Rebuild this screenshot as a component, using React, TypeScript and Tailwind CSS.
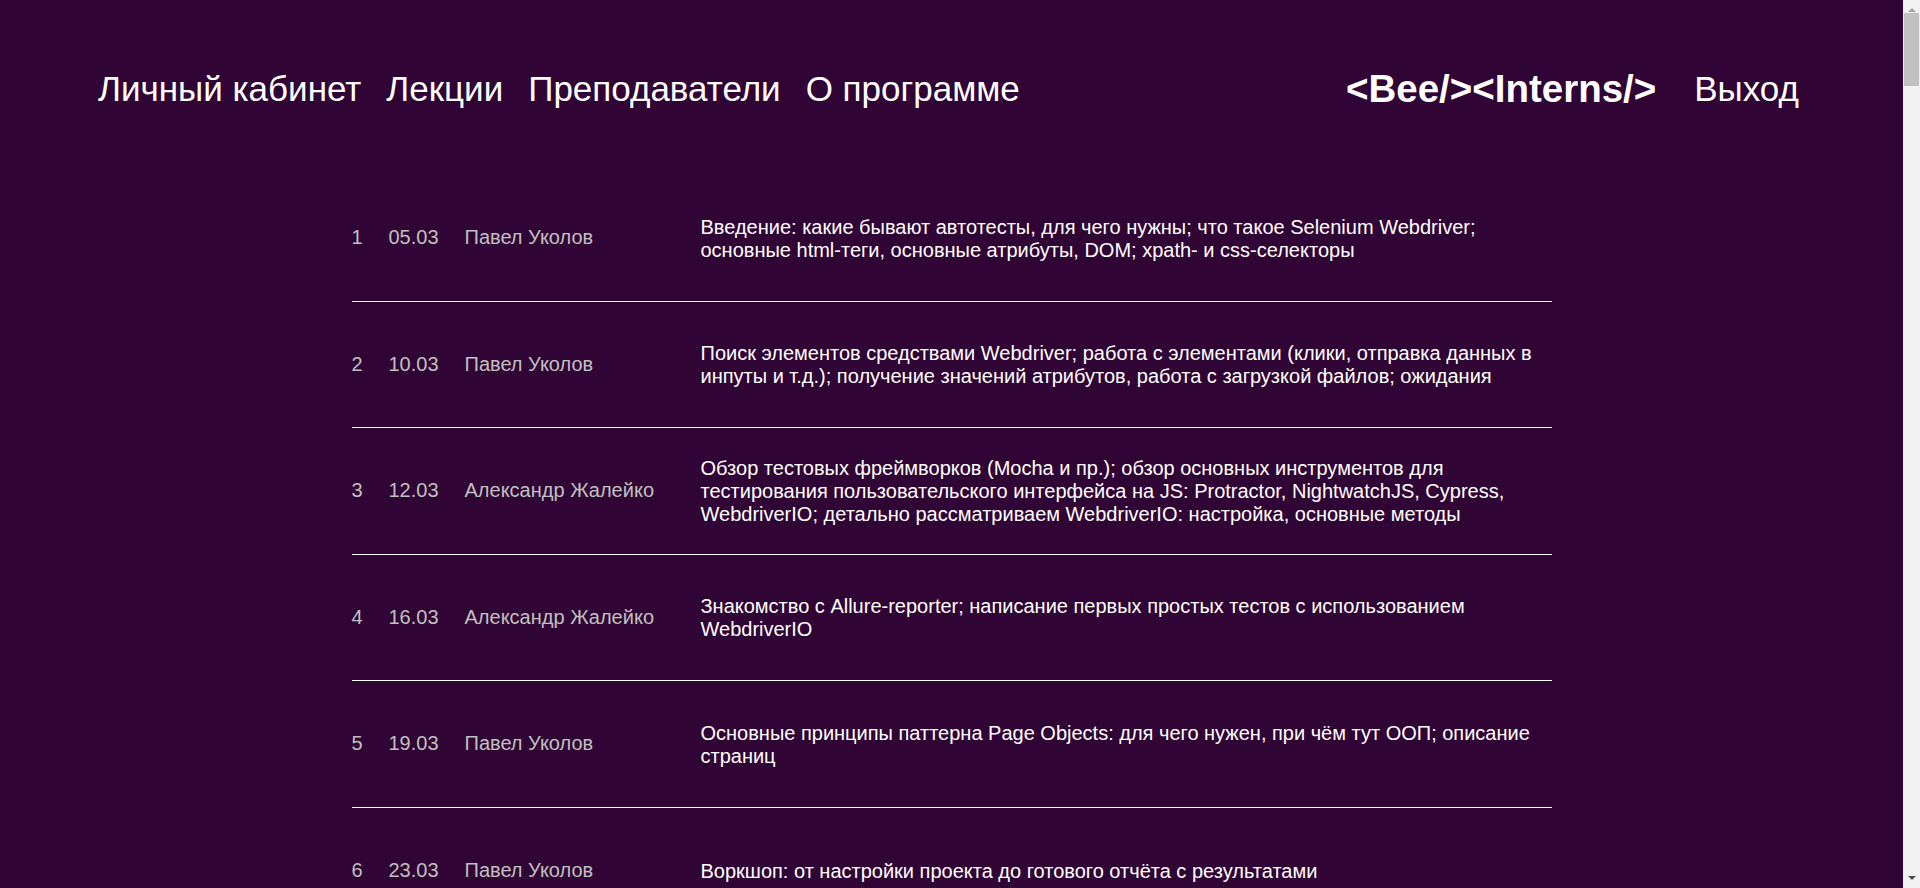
const lectures = [
  {
    n: 1,
    date: '05.03',
    lector: 'Павел Уколов',
    topic:
      'Введение: какие бывают автотесты, для чего нужны; что такое Selenium Webdriver; основные html-теги, основные атрибуты, DOM; xpath- и css-селекторы',
  },
  {
    n: 2,
    date: '10.03',
    lector: 'Павел Уколов',
    topic:
      'Поиск элементов средствами Webdriver; работа с элементами (клики, отправка данных в инпуты и т.д.); получение значений атрибутов, работа с загрузкой файлов; ожидания',
  },
  {
    n: 3,
    date: '12.03',
    lector: 'Александр Жалейко',
    topic:
      'Обзор тестовых фреймворков (Mocha и пр.); обзор основных инструментов для тестирования пользовательского интерфейса на JS: Protractor, NightwatchJS, Cypress, WebdriverIO; детально рассматриваем WebdriverIO: настройка, основные методы',
  },
  {
    n: 4,
    date: '16.03',
    lector: 'Александр Жалейко',
    topic: 'Знакомство с Allure-reporter; написание первых простых тестов с использованием WebdriverIO',
  },
  {
    n: 5,
    date: '19.03',
    lector: 'Павел Уколов',
    topic: 'Основные принципы паттерна Page Objects: для чего нужен, при чём тут ООП; описание страниц',
  },
  {
    n: 6,
    date: '23.03',
    lector: 'Павел Уколов',
    topic: 'Воркшоп: от настройки проекта до готового отчёта с результатами',
  },
  {
    n: 7,
    date: '26.03',
    lector: 'Александр Жалейко',
    topic: 'Запуск тестов в CI; параллельный запуск, Selenium Grid и Docker',
  },
  {
    n: 8,
    date: '30.03',
    lector: 'Павел Уколов',
    topic: 'Тестирование API: REST, инструменты, написание тестов',
  },
]

const nav = ['Личный кабинет', 'Лекции', 'Преподаватели', 'О программе']

export default function App() {
  return (
    <div className="flex h-[888px] overflow-hidden bg-[#300434] text-white font-['Liberation_Sans',Arial,sans-serif]">
      <div className="min-w-0 flex-1">
        {/* Header */}
        <header className="flex h-[175px] items-center pl-[98px] pr-[104px] pt-[3px] leading-[40px]">
          <nav className="flex gap-[25px] text-[35px]">
            {nav.map(item => (
              <a key={item} className="cursor-pointer">
                {item}
              </a>
            ))}
          </nav>
          <div className="ml-auto flex items-center gap-[38px]">
            <span className="text-[38.5px] font-bold">&lt;Bee/&gt;&lt;Interns/&gt;</span>
            <a className="cursor-pointer text-[35px]">Выход</a>
          </div>
        </header>

        {/* Lectures */}
        <div className="mx-auto w-[1200px]">
          {lectures.map(l => (
            <div
              key={l.n}
              className="flex h-[126.5px] items-center border-b border-white text-[20px] leading-[23px]"
            >
              <div className="w-[37px] text-[#c0c0c0]">{l.n}</div>
              <div className="w-[76px] text-[#c0c0c0]">{l.date}</div>
              <div className="w-[236px] text-[#c0c0c0]">{l.lector}</div>
              <div className="flex-1 pt-[2px]">{l.topic}</div>
            </div>
          ))}
        </div>
      </div>

      {/* window scrollbar */}
      <div className="flex w-[17px] shrink-0 flex-col items-center bg-[#f1f1f1]">
        <div className="flex h-[12px] items-end justify-center">
          <div className="h-0 w-0 border-x-[4px] border-b-[4px] border-x-transparent border-b-[#a3a3a3]" />
        </div>
        <div className="mt-[1px] h-[73px] w-[15px] bg-[#c1c1c1]" />
        <div className="flex-1" />
        <div className="flex h-[12px] items-start justify-center">
          <div className="h-0 w-0 border-x-[4px] border-t-[4px] border-x-transparent border-t-[#505050]" />
        </div>
      </div>
    </div>
  )
}
